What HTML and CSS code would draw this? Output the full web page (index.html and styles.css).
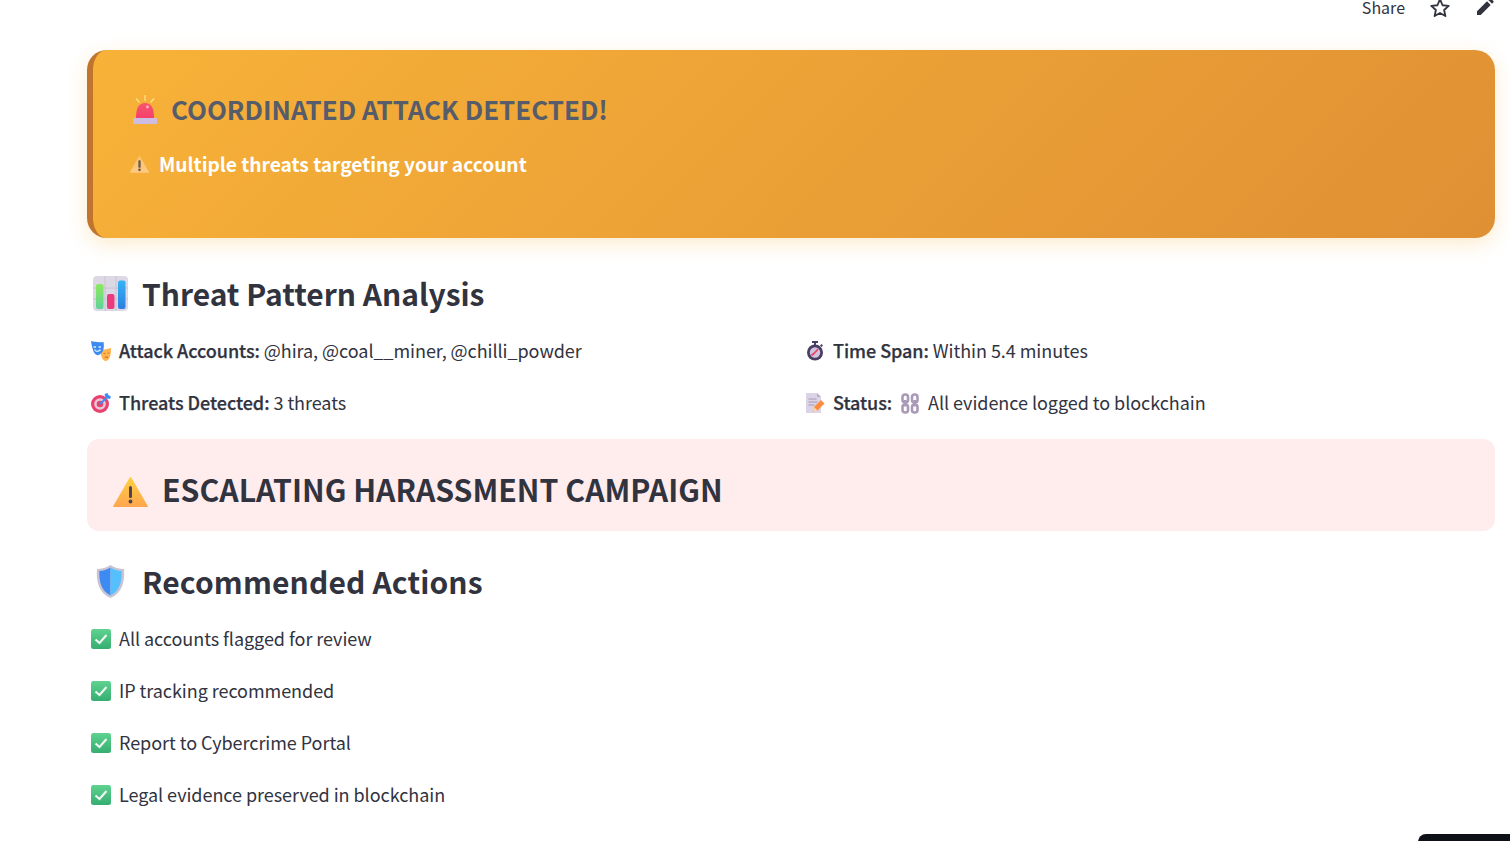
FILE: index.html
```html
<!DOCTYPE html>
<html lang="en">
<head>
<meta charset="utf-8">
<title>Threat Pattern Analysis</title>
<link rel="stylesheet" href="styles.css">
</head>
<body>
<svg class="defs" width="0" height="0" aria-hidden="true">
  <defs>
    <linearGradient id="warnG" x1="0" y1="0" x2="0" y2="1"><stop offset="0" stop-color="#ffd043"/><stop offset="1" stop-color="#ffa64d"/></linearGradient>
    <linearGradient id="warnS" x1="0" y1="0" x2="0" y2="1"><stop offset="0" stop-color="#f9c56f"/><stop offset="1" stop-color="#ffc982"/></linearGradient>
    <linearGradient id="sirenG" x1="0" y1="0" x2="0" y2="1"><stop offset="0" stop-color="#f8566d"/><stop offset="1" stop-color="#f43f6b"/></linearGradient>
    <linearGradient id="barA" x1="0" y1="0" x2="0" y2="1"><stop offset="0" stop-color="#8bea5c"/><stop offset="1" stop-color="#5fd39a"/></linearGradient>
    <linearGradient id="barC" x1="0" y1="0" x2="0" y2="1"><stop offset="0" stop-color="#36b4f5"/><stop offset="1" stop-color="#2b7fe0"/></linearGradient>
    <linearGradient id="chk" x1="0" y1="0" x2="0" y2="1"><stop offset="0" stop-color="#5fd28f"/><stop offset="1" stop-color="#35ae70"/></linearGradient>
    <symbol id="warn" viewBox="0 0 35 31">
      <path d="M17.500 1 34.500 30.500H.5Z" fill="url(#warnG)" stroke="url(#warnG)" stroke-width="1" stroke-linejoin="round"/>
      <rect x="16" y="10" width="3" height="12" rx="1.500" fill="#4a4453"/>
      <circle cx="17.500" cy="25.500" r="1.900" fill="#4a4453"/>
    </symbol>
    <symbol id="check" viewBox="0 0 20 20">
      <rect width="20" height="20" rx="2.500" fill="url(#chk)"/>
      <path d="M4.500 10.500 8.500 14 15.500 6" fill="none" stroke="#eef8f2" stroke-width="2.200"/>
    </symbol>
  </defs>
</svg>

<header class="topbar">
  <span class="share">Share</span>
  <svg class="top-star" viewBox="0 0 24 24"><path d="M12 2.500 14.800 9l6.700.7-5 4.500 1.400 6.600L12 17.400l-5.900 3.400 1.400-6.600-5-4.500L9.200 9Z" fill="none" stroke="#31333f" stroke-width="2" stroke-linejoin="round"/></svg>
  <svg class="top-pen" viewBox="0 0 18 18"><path d="M1 17v-3.700L11 3.300 14.700 7 4.700 17ZM12.300 2l1.200-1.200a1.200 1.200 0 0 1 1.700 0l2 2a1.200 1.200 0 0 1 0 1.700L16 5.700Z" fill="#31333f"/></svg>
</header>

<main class="page">
  <section class="alert">
    <div class="alert-title">
      <svg class="ic-siren" viewBox="0 0 24 29">
        <path d="M3 23.500C3 13 5.500 8 12 8s9 5 9 15.500Z" fill="url(#sirenG)"/>
        <circle cx="14.500" cy="12" r="1.400" fill="#ffb3bd"/>
        <rect y="23" width="24" height="6" rx=".8" fill="#cdbde3"/>
        <path d="M12 0v6M3 3.500l3.500 4M21 3.500l-3.500 4" stroke="#fbe38a" stroke-width="1.300" fill="none"/>
      </svg>
      <h1>COORDINATED ATTACK DETECTED!</h1>
    </div>
    <div class="alert-sub">
      <svg class="ic-warn-s" viewBox="0 0 35 31"><path d="M17.500 1 34.500 30.500H.5Z" fill="url(#warnS)"/><rect x="15.500" y="9" width="4" height="13" rx="1.500" fill="#6b5a4a"/><circle cx="17.500" cy="25.500" r="2.300" fill="#6b5a4a"/></svg>
      <p>Multiple threats targeting your account</p>
    </div>
  </section>

  <h2 class="section-head">
    <svg class="ic-head" viewBox="0 0 35 35">
      <rect width="35" height="35" rx="4" fill="#ddd8e6"/>
      <path d="M0 12h35M0 23h35M12 0v35M23 0v35" stroke="#c8c2d3" stroke-width="1"/>
      <rect x="3" y="8" width="7.500" height="25" rx="2" fill="url(#barA)"/>
      <rect x="14" y="18" width="7.500" height="15" rx="2" fill="#ec3b7c"/>
      <rect x="25" y="4.500" width="7.500" height="28.500" rx="2" fill="url(#barC)"/>
    </svg>
    Threat Pattern Analysis
  </h2>

  <div class="facts">
    <div class="line">
      <svg class="ic" viewBox="0 0 20 20">
        <path d="M9.500 8.500 14 8.500l6-1.500c0 7-1 12-5 13-3.500.5-5.500-5-5.500-11.500Z" fill="#ffb54f"/>
        <path d="M0 0c3 1 8 1.500 12.500 1 1 5.500 0 11.500-5 13C3 15.500 1 7 0 0Z" fill="#3d8bf2"/>
        <path d="M2.500 6h2.500M7.500 6H10M3.500 8.500c1.500 2.500 4 2.500 6 0" stroke="#d8ecff" stroke-width="1.300" fill="none"/>
        <path d="M12.500 12.500h2M16.500 12h2M14 17c.8-1.500 2.200-1.500 3 0" stroke="#d4772a" stroke-width="1.100" fill="none"/>
      </svg>
      <span class="txt"><b>Attack Accounts:</b> @hira, @coal__miner, @chilli_powder</span>
    </div>
    <div class="line">
      <svg class="ic" viewBox="0 0 20 20">
        <rect x="7" y="0" width="6" height="2" fill="#4a3f63"/>
        <rect x="9" y="1" width="2" height="3" fill="#4a3f63"/>
        <path d="M15 4.500 16.500 3 18 4.500 16.500 6Z" fill="#4a3f63"/>
        <circle cx="10" cy="11.500" r="8" fill="#4a3f63"/>
        <circle cx="10" cy="11.500" r="5.200" fill="#cfc6dd"/>
        <path d="M10 11.500 13 8" stroke="#ef3f6b" stroke-width="1.700"/>
        <path d="M6.500 14.500 10 11.500" stroke="#ef3f6b" stroke-width="1.700"/>
      </svg>
      <span class="txt"><b>Time Span:</b> Within 5.4 minutes</span>
    </div>
    <div class="line">
      <svg class="ic" viewBox="0 0 20 20">
        <circle cx="9" cy="11" r="9" fill="#e8426f"/>
        <circle cx="9" cy="11" r="5.800" fill="#e9c9d8"/>
        <circle cx="9" cy="11" r="3.300" fill="#e8426f"/>
        <path d="M9 11 18 2.500" stroke="#3f8ef0" stroke-width="2"/>
        <path d="M13.500 1 14.500 5 19 6 20 3.500 17.500 2.500 16.500 0Z" fill="#3f8ef0"/>
      </svg>
      <span class="txt"><b>Threats Detected:</b> 3 threats</span>
    </div>
    <div class="line">
      <svg class="ic" viewBox="0 0 20 20">
        <path d="M1 0h11l4 4v16H1Z" fill="#ddd3e6"/>
        <path d="M12 0l4 4h-4Z" fill="#b9adc7"/>
        <path d="M3.500 6h8M3.500 9h9M3.500 12h6" stroke="#a79ab8" stroke-width="1"/>
        <path d="M8 18.500 9 14l7-7 3.500 3.500-7 7Z" fill="#ff8b3d"/>
        <path d="M8 18.500 9 14l3.500 3.500Z" fill="#ffd8a8"/>
      </svg>
      <span class="txt status"><b>Status:</b>
        <svg class="ic-chain" viewBox="0 0 18 21" fill="none" stroke="#a99bb8" stroke-width="2.600">
          <rect x="1.500" y="1.500" width="5.500" height="8" rx="2.500"/><rect x="1.500" y="11.500" width="5.500" height="8" rx="2.500"/>
          <rect x="11" y="1.500" width="5.500" height="8" rx="2.500"/><rect x="11" y="11.500" width="5.500" height="8" rx="2.500"/>
          <path d="M4.250 7v6.500M13.750 7v6.500"/>
        </svg>
        All evidence logged to blockchain</span>
    </div>
  </div>

  <section class="campaign">
    <svg class="ic-warn-b"><use href="#warn"/></svg>
    <h2>ESCALATING HARASSMENT CAMPAIGN</h2>
  </section>

  <h2 class="section-head section-head-wide">
    <svg class="ic-head shield" viewBox="0 0 30 36">
      <path d="M15 1C19 4 24 5 29 5c1 13-2 25-14 30C3 30 0 18 1 5c5 0 10-1 14-4Z" fill="#c9c3d3"/>
      <path d="M15 3.500C11 6 7.500 7 3.500 7.200 3 18 5.500 28 15 32.500Z" fill="#3d8bf2"/>
      <path d="M15 3.500c4 2.500 7.500 3.500 11.500 3.700C27 18 24.500 28 15 32.500Z" fill="#56c0ff"/>
    </svg>
    Recommended Actions
  </h2>

  <ul class="actions">
    <li class="line"><svg class="ic"><use href="#check"/></svg><span class="txt">All accounts flagged for review</span></li>
    <li class="line"><svg class="ic"><use href="#check"/></svg><span class="txt">IP tracking recommended</span></li>
    <li class="line"><svg class="ic"><use href="#check"/></svg><span class="txt">Report to Cybercrime Portal</span></li>
    <li class="line"><svg class="ic"><use href="#check"/></svg><span class="txt">Legal evidence preserved in blockchain</span></li>
  </ul>
</main>

<div class="corner-chip"></div>
</body>
</html>
```

FILE: styles.css
```css
* { box-sizing: border-box; }

html, body {
  margin: 0;
  height: 100%;
  overflow: hidden;
  background: #fff;
}

body {
  position: relative;
  font-family: "Noto Sans CJK SC", "Source Sans Pro", "Noto Sans", sans-serif;
  color: #31333f;
  font-size: 18px;
}

.defs { position: absolute; }

.topbar {
  height: 50px;
  display: flex;
  align-items: flex-start;
  justify-content: flex-end;
  padding-right: 16px;
}
.share { font-size: 16px; line-height: 14px; margin-right: 24px; color: #31333f; }
.top-star { width: 22px; height: 22px; margin: -3px 25px 0 0; }
.top-pen { width: 18px; height: 18px; margin: -2px 0 0; }

.page { padding: 0 15px 0 87px; }

.alert {
  height: 188px;
  margin-bottom: 31px;
  padding: 36px 30px 0 36px;
  border-left: 6px solid #c0752f;
  border-radius: 20px;
  background: linear-gradient(135deg, #f8b238, #df9034);
  box-shadow: 0 6px 20px rgba(247, 176, 60, .25);
}
.alert-title { display: flex; align-items: center; height: 46px; margin-left: 4px; }
.alert-title h1 { margin: 0 0 0 14px; font-size: 25.9px; line-height: 46px; font-weight: 700; color: #575c6a; }
.ic-siren { width: 24px; height: 29px; flex: none; }
.alert-sub { display: flex; align-items: center; height: 32px; margin-top: 16px; }
.alert-sub p { margin: 0 0 0 9px; font-size: 19.2px; line-height: 32px; font-weight: 700; color: #fff; letter-spacing: -.02px; }
.ic-warn-s { width: 21px; height: 18px; flex: none; }

.section-head {
  display: flex;
  align-items: center;
  height: 48px;
  margin: 0 0 8px;
  padding-left: 6px;
  font-size: 30px;
  font-weight: 700;
  line-height: 48px;
  color: #31333f;
}
.section-head-wide { letter-spacing: .15px; }
.ic-head { width: 35px; height: 35px; flex: none; margin-right: 14px; }
.shield { width: 29px; margin: 0 17px 0 3px; }

.facts {
  display: grid;
  grid-template-columns: 714px 1fr;
  margin-bottom: 10px;
}

.line { display: flex; align-items: center; height: 52px; padding-left: 4px; }
.ic { width: 20px; height: 20px; flex: none; margin-right: 8px; }
.txt { font-size: 18px; line-height: 28px; margin-top: -2px; letter-spacing: -.05px; white-space: nowrap; }
.txt b { font-weight: 500; -webkit-text-stroke: .25px currentColor; }
.ic-chain { width: 18px; height: 21px; margin: 0 5px; vertical-align: -4px; }

.campaign {
  display: flex;
  align-items: center;
  height: 92px;
  margin-bottom: 26px;
  padding: 8px 0 0 26px;
  border-radius: 12px;
  background: #ffecec;
}
.campaign h2 { margin: 0 0 0 14px; font-size: 30.25px; font-weight: 700; line-height: 48px; color: #31333f; }
.ic-warn-b { width: 35px; height: 31px; flex: none; margin-top: 5px; }

.actions { list-style: none; margin: 0; padding: 0; }

.corner-chip {
  position: absolute;
  right: 0;
  top: 834px;
  width: 92px;
  height: 30px;
  border-radius: 8px 0 0 0;
  background: #0e1117;
}
```
